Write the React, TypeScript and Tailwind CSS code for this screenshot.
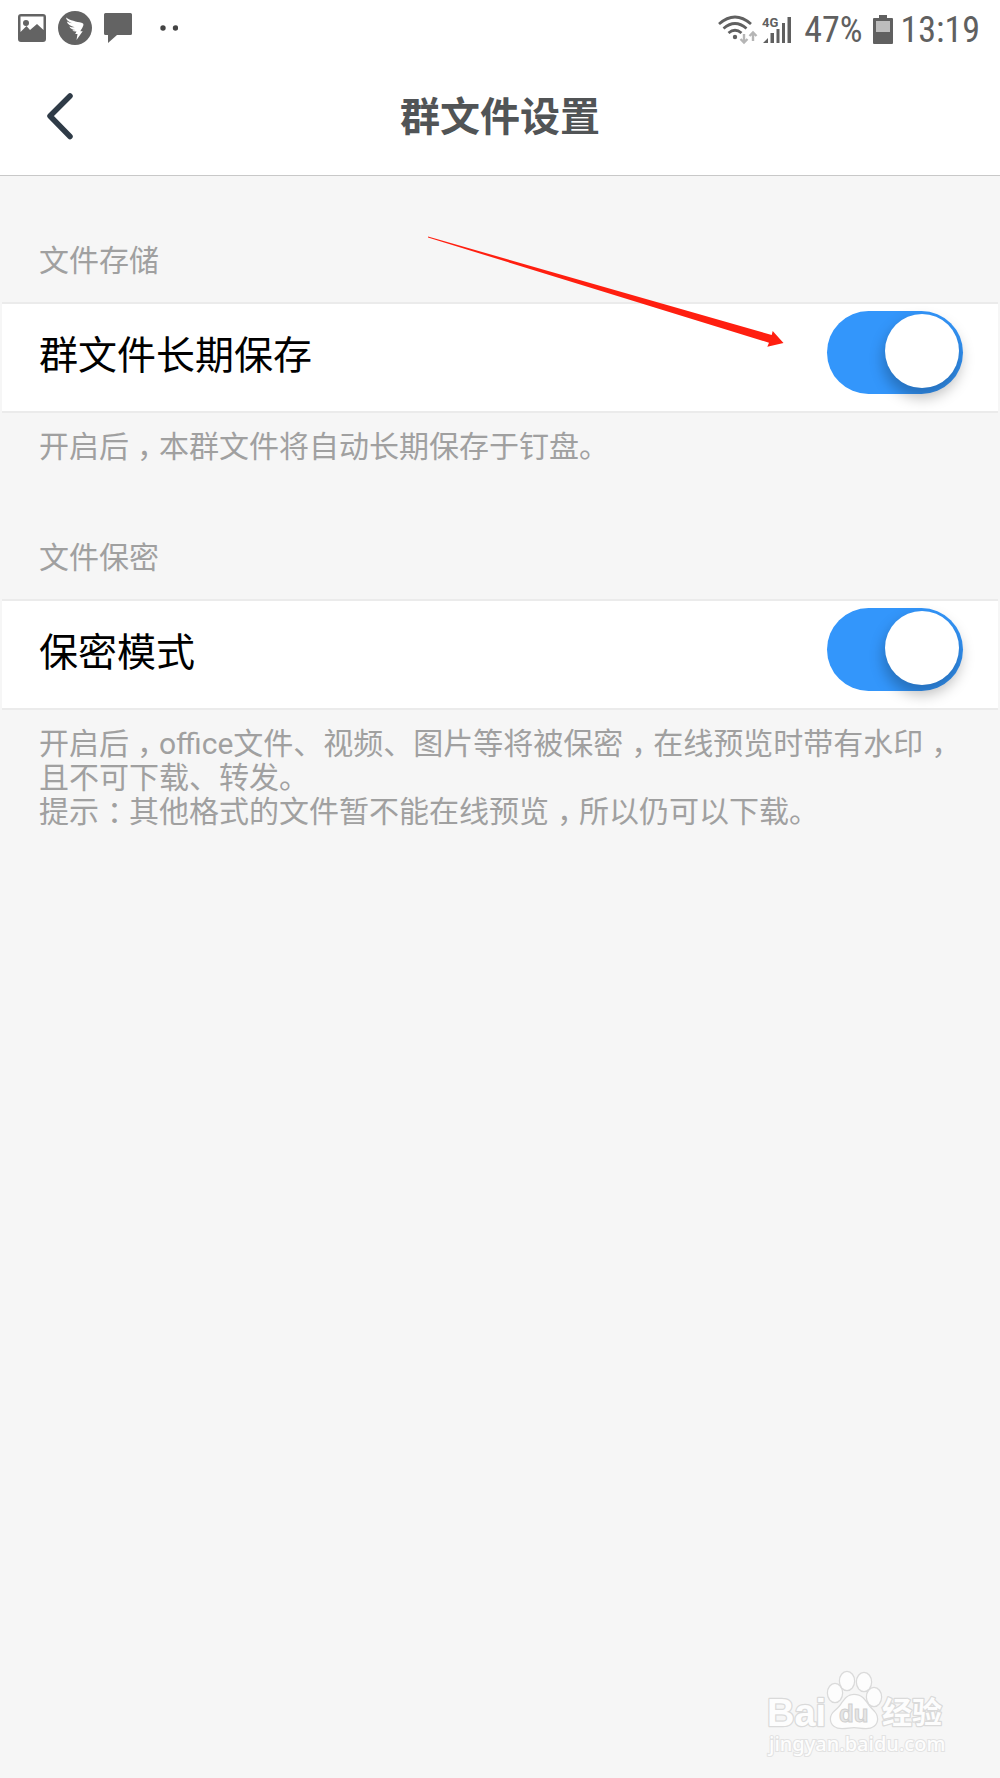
import { useId, useState, type ReactNode } from "react";

/** Full-width punctuation centred in its em box. */
function Mark({ children }: { children: string }) {
  return <span className="pr-[7px] pl-2 [font-feature-settings:'halt']">{children}</span>;
}

function PictureIcon() {
  return (
    <svg viewBox="0 0 28 28" className="size-7" aria-hidden="true">
      <path
        fill="#636363"
        fillRule="evenodd"
        d="M3 0h22a3 3 0 0 1 3 3v22a3 3 0 0 1-3 3H3a3 3 0 0 1-3-3V3a3 3 0 0 1 3-3ZM2.500 2.500V18l6-6 3.500 4 7-6 6.500 6V2.500Z"
      />
      <circle cx="8" cy="9" r="3" fill="#636363" />
    </svg>
  );
}

function WingIcon() {
  return (
    <svg viewBox="0 0 34 34" className="size-[34px]" aria-hidden="true">
      <circle cx="17" cy="17" r="17" fill="#636363" />
      <path
        fill="#fff"
        d="M8 6.500c4 3 10.500 4.200 15.500 5.200 1.800.4 2.300 1.500 1.800 2.900-.7 2-1.900 4-3 5.600h2.400L18.500 29l1-6h-2.300l1.300-2.600c-1.600.4-3 .1-4.200-1.100 1 .1 2 0 3-.3-2.600-.2-4.900-1.300-6-3.600 1.800.7 3.600.9 5.400.8C12.500 15 9.500 13.200 8.800 10.400c1.600.9 3.400 1.500 5.200 1.800C10.500 10.800 8.200 9 8 6.500Z"
      />
    </svg>
  );
}

function MessageIcon() {
  return (
    <svg viewBox="0 0 28 30" className="h-[30px] w-7" aria-hidden="true">
      <path fill="#636363" d="M1.500 0h25A1.500 1.500 0 0 1 28 1.500v19a1.500 1.500 0 0 1-1.500 1.500H13l-9 8v-8H1.500A1.500 1.500 0 0 1 0 20.500v-19A1.500 1.500 0 0 1 1.500 0Z" />
    </svg>
  );
}

function WifiIcon() {
  return (
    <svg viewBox="0 0 40 30" className="h-[30px] w-10" aria-hidden="true">
      <g fill="none" stroke="#606060" strokeWidth="2.800">
        <path d="M1 9Q17-5 33 9" />
        <path d="M5.500 13.500Q17 3.500 28.500 13.500" />
        <path d="M10.500 18Q17 12.500 23.500 18" />
      </g>
      <circle cx="17" cy="22" r="2.200" fill="#606060" />
      <g fill="none" stroke="#b5b5b5" strokeWidth="2.400">
        <path d="M26 19v8M22.500 24l3.500 3.500 3.500-3.500" />
        <path d="M35 26v-8M31.500 21l3.500-3.500 3.500 3.500" />
      </g>
    </svg>
  );
}

function SignalIcon() {
  return (
    <svg viewBox="0 0 30 28" className="h-7 w-[30px]" aria-hidden="true">
      <text x="0" y="11" fontSize="13" fontWeight="700" fontFamily="Roboto, sans-serif" fill="#606060">
        4G
      </text>
      <path fill="#606060" d="M1 27l5-5v5ZM8.500 17H12v10H8.500ZM14.500 13h3v14h-3ZM20 7h3v20h-3ZM25.500 1H29v26h-3.500Z" />
    </svg>
  );
}

function BatteryIcon() {
  return (
    <svg viewBox="0 0 20 30" className="h-[30px] w-5" aria-hidden="true">
      <path fill="#606060" d="M6 0h8v3h5a1 1 0 0 1 1 1v24a1 1 0 0 1-1 1H1a1 1 0 0 1-1-1V4a1 1 0 0 1 1-1h5Z" />
      <path fill="#bdbdbd" d="M3 6h14v11H3Z" />
    </svg>
  );
}

function StatusBar() {
  return (
    <div className="flex h-14 items-center justify-between pr-5 pl-[18px] text-[#606060]">
      <div className="flex items-center gap-3">
        <PictureIcon />
        <WingIcon />
        <MessageIcon />
        <svg viewBox="0 0 18 6" className="ml-4 h-[6px] w-[18px]" aria-hidden="true">
          <circle cx="3" cy="3" r="2.700" fill="#444" />
          <circle cx="15.500" cy="3" r="2.700" fill="#444" />
        </svg>
      </div>
      <div className="flex items-center gap-1 pt-1 font-['Roboto_Condensed','Liberation_Sans_Narrow',Roboto,sans-serif] text-4xl leading-9">
        <WifiIcon />
        <SignalIcon />
        <span className="ml-2">47%</span>
        <span className="mr-1 ml-1.5">
          <BatteryIcon />
        </span>
        <span>13:19</span>
      </div>
    </div>
  );
}

function Section({ title, label, children }: { title: string; label: string; children: ReactNode }) {
  const id = useId();
  const [on, setOn] = useState(true);
  return (
    <section>
      <h2 className="px-[39px] pb-6 text-3xl leading-[34px] text-[#a0a0a0]">{title}</h2>
      <div className="mx-0.5 flex min-h-[111px] items-start justify-between border-y-2 border-[#ebebeb] bg-white pt-[7px] pr-[35px] pl-[37px]">
        <label htmlFor={id} className="text-[39px] leading-[90px] text-black">
          {label}
        </label>
        <input
          id={id}
          type="checkbox"
          role="switch"
          checked={on}
          onChange={(e) => setOn(e.target.checked)}
          className="flex h-[83px] w-[136px] shrink-0 cursor-pointer appearance-none items-center rounded-full bg-[#ccc] px-1 pb-1 before:size-[74px] before:rounded-full before:bg-white before:shadow-[0_8px_14px_2px_rgba(0,0,0,0.25)] checked:justify-end checked:bg-[#3396fb]"
        />
      </div>
      <p className="pt-[17px] pr-9 pl-[39px] text-3xl leading-[34px] text-[#a0a0a0]">{children}</p>
    </section>
  );
}

function Arrow() {
  return (
    <svg viewBox="0 0 356 112" className="pointer-events-none absolute top-[60px] right-[216px] h-28 w-[356px]" aria-hidden="true">
      <path fill="#ff1f10" d="M0 .5 343.700 99l1-4L355.500 107 339.300 110.700l1.700-4L0 1.500Z" />
    </svg>
  );
}

function Watermark() {
  return (
    <svg viewBox="0 0 184 90" className="absolute right-[52px] bottom-5 h-[90px] w-[184px]" role="img" aria-label="Baidu 经验">
      <g fill="#fdfdfd" stroke="#dadada" strokeWidth="2.500" strokeLinejoin="round" style={{ paintOrder: "stroke" }}>
        <text x="3" y="58" fontSize="38" fontWeight="700" fontFamily="Liberation Sans, sans-serif">
          Bai
        </text>
        <ellipse cx="71" cy="25" rx="7" ry="9" />
        <ellipse cx="83" cy="13" rx="7" ry="9" />
        <ellipse cx="100" cy="14" rx="7" ry="9" />
        <ellipse cx="110" cy="29" rx="7" ry="9" />
        <path d="M90 27c7 0 10 4 14 10s9 7 9 14c0 6-5 9-11 9-5 0-8-1-12-1s-7 1-12 1c-6 0-11-3-11-9 0-7 6-8 10-14s7-10 13-10Z" />
        <text x="118" y="55" fontSize="30" fontWeight="700" fontFamily="Noto Sans CJK SC, sans-serif">
          经验
        </text>
      </g>
      <text
        x="5"
        y="83"
        fontSize="20"
        fontWeight="500"
        fontFamily="Noto Sans, sans-serif"
        fill="#fdfdfd"
        stroke="#e2e2e2"
        strokeWidth="2"
        style={{ paintOrder: "stroke" }}
      >
        jingyan.baidu.com
      </text>
      <text x="75" y="54" fontSize="24" fontWeight="700" fontFamily="Liberation Sans, sans-serif" fill="#e6e6e6" stroke="#d0d0d0">
        du
      </text>
    </svg>
  );
}

export default function App() {
  return (
    <div className="relative flex min-h-screen flex-col bg-[#f6f6f6] font-[Roboto,'Noto_Sans_CJK_SC',sans-serif]" lang="zh-CN">
      <header className="border-b border-[#c8c8c8] bg-white">
        <StatusBar />
        <div className="grid h-[119px] grid-cols-[1fr_auto_1fr] items-center">
          <button type="button" aria-label="返回" className="ml-11 w-8">
            <svg viewBox="0 0 32 50" className="h-[50px] w-8" fill="none" aria-hidden="true">
              <path d="M26 5 6 25l20 20.500" stroke="#2f3b47" strokeWidth="5.500" strokeLinecap="round" strokeLinejoin="round" />
            </svg>
          </button>
          <h1 className="pt-1 text-[40px] leading-[60px] font-bold text-[#515456]">群文件设置</h1>
        </div>
      </header>
      <main className="relative flex flex-col gap-[77px] pt-[68px]">
        <Section title="文件存储" label="群文件长期保存">
          开启后<Mark>，</Mark>本群文件将自动长期保存于钉盘。
        </Section>
        <Section title="文件保密" label="保密模式">
          开启后<Mark>，</Mark>office文件、视频、图片等将被保密<Mark>，</Mark>在线预览时带有水印<Mark>，</Mark>且不可下载、转发。
          <br />
          提示<Mark>：</Mark>其他格式的文件暂不能在线预览<Mark>，</Mark>所以仍可以下载。
        </Section>
        <Arrow />
      </main>
      <Watermark />
    </div>
  );
}
